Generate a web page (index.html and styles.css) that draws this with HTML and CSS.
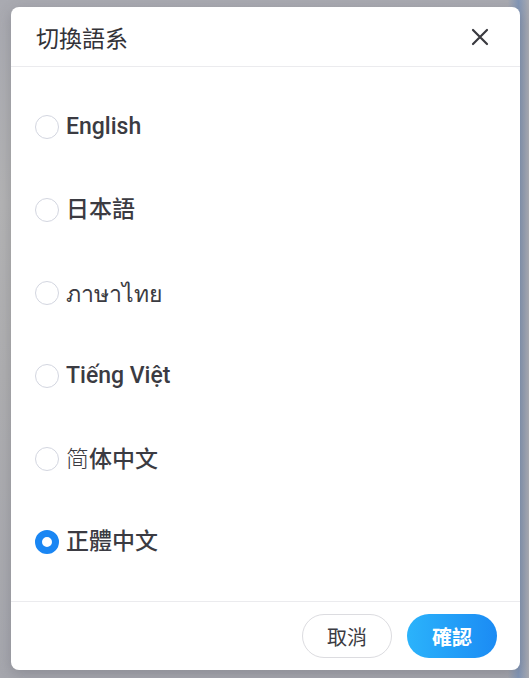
FILE: index.html
```html
<!DOCTYPE html>
<html lang="zh-Hant">
<head>
  <meta charset="UTF-8">
  <meta name="viewport" content="width=device-width, initial-scale=1.0">
  <title>切換語系</title>
  <link rel="stylesheet" href="styles.css">
</head>
<body>
  <div class="modal">
    <div class="modal-header">
      <h2 class="modal-title">切換語系</h2>
      <button class="close-btn" aria-label="close">
        <svg width="18" height="18" viewBox="0 0 18 18">
          <path d="M2 2L16 16M16 2L2 16" stroke="#3a3a3f" stroke-width="2.2" stroke-linecap="round"/>
        </svg>
      </button>
    </div>

    <div class="lang-list">
      <label class="lang-item"><span class="radio"></span><span class="lang-name">English</span></label>
      <label class="lang-item"><span class="radio"></span><span class="lang-name">日本語</span></label>
      <label class="lang-item"><span class="radio"></span><span class="lang-name thai">ภาษาไทย</span></label>
      <label class="lang-item"><span class="radio"></span><span class="lang-name">Tiếng Việt</span></label>
      <label class="lang-item"><span class="radio"></span><span class="lang-name"><span class="light">简</span>体中文</span></label>
      <label class="lang-item"><span class="radio checked"></span><span class="lang-name">正體中文</span></label>
    </div>

    <div class="modal-footer">
      <button class="btn btn-cancel">取消</button>
      <button class="btn btn-ok">確認</button>
    </div>
  </div>
</body>
</html>
```

FILE: styles.css
```css
body {
  margin: 0;
  padding: 7px 9px 8px 11px;
  height: 678px;
  box-sizing: border-box;
  font-family: Roboto, "Noto Sans CJK TC", sans-serif;
  background:
    linear-gradient(90deg, rgba(170,170,178,0) 96%, #8296b6 98%, #a8a9b0 100%),
    linear-gradient(180deg, #a9aab1 0%, #b4b4b5 30%, #afafb1 55%, #a6a7ae 100%);
}

.modal {
  width: 509px;
  height: 663px;
  background: #fff;
  border-radius: 8px;
  display: flex;
  flex-direction: column;
  box-shadow: 0 4px 14px rgba(60, 60, 70, 0.25);
}

.modal-header {
  height: 59px;
  border-bottom: 1px solid #ebebee;
  display: flex;
  align-items: center;
  justify-content: space-between;
  padding: 0 31px 0 25px;
}

.modal-title {
  margin: 0;
  font-size: 23px;
  font-weight: 400;
  color: #333338;
  font-family: "Noto Sans CJK TC", sans-serif;
}

.close-btn {
  border: none;
  background: none;
  padding: 0;
  width: 18px;
  height: 18px;
  display: flex;
  cursor: pointer;
}

.lang-list {
  flex: 1;
  padding: 18px 24px;
  display: flex;
  flex-direction: column;
}

.lang-item {
  height: 83px;
  display: flex;
  align-items: center;
  gap: 7px;
  cursor: pointer;
}

.radio {
  width: 24px;
  height: 24px;
  box-sizing: border-box;
  border: 1px solid #d3d6e0;
  border-radius: 50%;
  flex-shrink: 0;
}

.radio.checked {
  border: 7.5px solid #1a86f3;
  background: #fff;
}

.lang-name {
  font-size: 23px;
  font-weight: 500;
  line-height: 30px;
  color: #3b3b42;
  font-family: Roboto, "Noto Sans CJK TC", sans-serif;
}

.lang-name.thai {
  font-family: "Noto Sans", "DejaVu Sans", sans-serif;
}

.lang-name .light {
  font-weight: 300;
  font-family: "Noto Sans CJK SC", sans-serif;
}

.modal-footer {
  height: 68px;
  border-top: 1px solid #ebebee;
  display: flex;
  justify-content: flex-end;
  align-items: center;
  gap: 15px;
  padding: 0 23px;
}

.btn {
  width: 90px;
  height: 44px;
  border-radius: 22px;
  font-size: 20px;
  font-family: "Noto Sans CJK TC", sans-serif;
  cursor: pointer;
}

.btn-cancel {
  background: #fff;
  border: 1px solid #dcdce0;
  color: #3b3b42;
}

.btn-ok {
  border: none;
  color: #fff;
  font-weight: 700;
  background: linear-gradient(90deg, #2bb3fb 0%, #1b8bf4 100%);
}
```
